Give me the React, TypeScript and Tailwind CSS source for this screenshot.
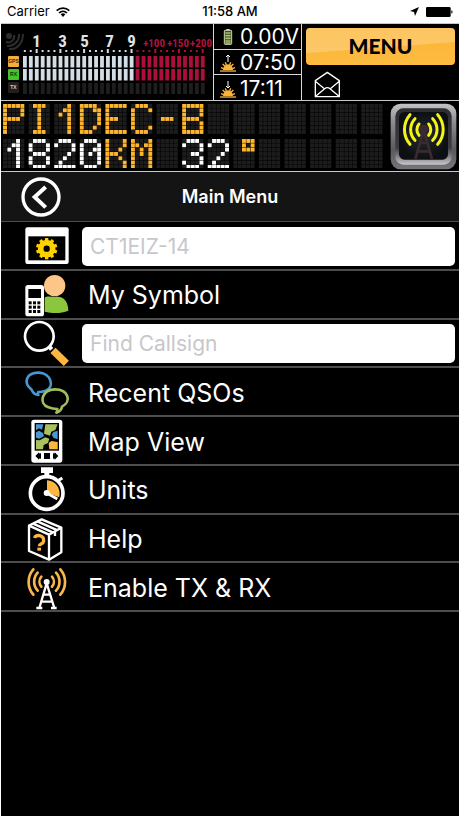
import type { ReactNode } from 'react';

const GLYPHS: Record<string, string[]> = {
  P: ['11111', '10001', '10001', '11110', '10000', '10000', '10000'],
  I: ['01110', '00100', '00100', '00100', '00100', '00100', '01110'],
  '1': ['00010', '00110', '01010', '00010', '00010', '00010', '00010'],
  D: ['11110', '10011', '10001', '10001', '10001', '10010', '11100'],
  E: ['11111', '10000', '10000', '11100', '10000', '10000', '11111'],
  C: ['01110', '10001', '10000', '10000', '10000', '10001', '01110'],
  '-': ['00000', '00000', '00000', '01110', '00000', '00000', '00000'],
  B: ['11111', '10001', '10001', '11110', '10001', '10001', '11111'],
  '8': ['01110', '10001', '10001', '01110', '10001', '10001', '01110'],
  '2': ['01110', '10001', '00001', '00010', '00100', '01000', '11111'],
  '0': ['01110', '10001', '10011', '10101', '10001', '10001', '01110'],
  K: ['10001', '10001', '10010', '11100', '10010', '10001', '10001'],
  M: ['10001', '11011', '10101', '10101', '10001', '10001', '10001'],
  '3': ['01110', '10001', '00001', '00110', '00001', '10001', '01110'],
  '°': ['00111', '00101', '00111', '00000', '00000', '00000', '00000'],
};

const CELLS = 15;
const AMBER = '#ffb52e';

function LedRow({ text, colors }: { text: string; colors: string[] }) {
  const dots: ReactNode[] = [];
  for (let c = 0; c < CELLS; c++) {
    const glyph = GLYPHS[text[c]];
    for (let y = 0; y < 7; y++) {
      for (let x = 0; x < 5; x++) {
        const on = glyph ? glyph[y][x] === '1' : false;
        dots.push(
          <rect
            key={`${c}-${y}-${x}`}
            x={c * 59 + x * 10}
            y={y * 10}
            width="9"
            height="9"
            fill={on ? colors[c] : '#1c1c1c'}
          />,
        );
      }
    }
  }
  return (
    <svg viewBox="0 0 876 69" className="block w-full" role="img" aria-label={text}>
      {dots}
    </svg>
  );
}

function SignalMeter() {
  const bars = Array.from({ length: 31 }, (_, i) => i);
  const majors = [2, 6, 10, 14, 18, 22, 26, 30];
  const digits: [string, number][] = [['1', 36], ['3', 62], ['5', 84], ['7', 109], ['9', 131]];
  const plus: [string, number][] = [['+100', 154], ['+150', 178], ['+200', 201]];
  return (
    <svg viewBox="0 0 212 76" className="block h-[76px] w-[212px] shrink-0" role="img" aria-label="Signal meter">
      <g fill="none" stroke="#2d2d2d" strokeWidth="2">
        <circle cx="8" cy="12" r="2" fill="#2d2d2d" />
        <path d="M5 18a6 6 0 0 0 8-7M6 22a11 11 0 0 0 12-12M8 25c8 1 14-6 14-15" />
      </g>
      <g textAnchor="middle" className="font-['Liberation_Sans_Narrow','Roboto_Condensed','DejaVu_Sans_Condensed','Roboto',sans-serif]">
        {digits.map(([t, x]) => (
          <text key={t} x={x - 0.5} y="23" fontSize="17" fontWeight="700" fill="#dfe4e8">{t}</text>
        ))}
        {plus.map(([t, x]) => (
          <text key={t} x={x - 1} y="23" fontSize="11" fontWeight="700" fill="#b3123d">{t}</text>
        ))}
      </g>
      {bars.map((i) => {
        const x = 22 + i * 5.93;
        const color = i < 19 ? '#d3dde6' : '#ab0f3a';
        const major = majors.includes(i);
        return (
          <g key={i} fill={color}>
            <rect x={x + 0.8} y={major ? 25 : 26} width="2" height={major ? 4 : 2} />
            <rect x={x} y="32" width="3.8" height="11.5" />
            <rect x={x} y="45" width="3.8" height="11.5" />
            <rect x={x} y="59" width="3.8" height="11" fill="#1e1e1e" />
          </g>
        );
      })}
      <g textAnchor="middle" fontSize="5" fontWeight="700" className="font-['Liberation_Sans',sans-serif]">
        <rect x="7" y="32" width="11" height="11" rx="1" fill="#f3ad3d" />
        <text x="12.500" y="39" fill="#3a2a08">GPS</text>
        <rect x="7" y="45" width="11" height="11" rx="1" fill="#43c32c" />
        <text x="12.500" y="52" fill="#0c3a08">RX</text>
        <rect x="7" y="58" width="11" height="11" rx="1" fill="#202020" />
        <text x="12.500" y="65" fill="#d0d0d0">TX</text>
      </g>
    </svg>
  );
}

function SunIcon({ rising }: { rising: boolean }) {
  return (
    <svg viewBox="0 0 48 54" className="h-[18px] w-4 shrink-0" aria-hidden="true">
      <g stroke="#fdb338" strokeWidth="4">
        <path d="M8 30l7 7M40 30l-7 7M3 41l8 3M45 41l-8 3M16 25l3 8M32 25l-3 8" />
      </g>
      <path d="M9 48a15 17 0 0 1 30 0z" fill="#fdb338" />
      <path d="M0 51h48" stroke="#fdb338" strokeWidth="4" />
      <path
        d={rising ? 'M24 24V3M18 9l6-6 6 6' : 'M24 3v21M18 18l6 6 6-6'}
        fill="none"
        stroke="#fff"
        strokeWidth="3"
      />
    </svg>
  );
}

function BatteryCell() {
  return (
    <svg viewBox="0 0 26 48" className="h-4 w-4 shrink-0" aria-hidden="true">
      <rect x="8" y="0" width="10" height="5" fill="#cfd8b0" />
      <rect x="2" y="4" width="22" height="42" rx="2" fill="#39472a" stroke="#cfd8b0" strokeWidth="3" />
      <path d="M5 12h16M5 20h16M5 28h16M5 36h16M5 42h16" stroke="#a6c46a" strokeWidth="5" />
    </svg>
  );
}

function Readout({ icon, children }: { icon: ReactNode; children: ReactNode }) {
  return (
    <div className="flex min-h-0 items-center gap-1 bg-black pl-1.5 pt-0.5 text-[21px] leading-[22px] text-white">
      {icon}
      <span>{children}</span>
    </div>
  );
}

function TransmitIcon() {
  return (
    <svg viewBox="0 0 201 201" className="block h-[67px] w-[67px]" aria-hidden="true">
      <defs>
        <linearGradient id="bezel" x1="0" y1="0" x2="0" y2="1">
          <stop offset="0" stopColor="#c4c4c6" />
          <stop offset=".3" stopColor="#8a8a8e" />
          <stop offset=".7" stopColor="#5a5a5e" />
          <stop offset="1" stopColor="#77777b" />
        </linearGradient>
        <linearGradient id="bezelInner" x1="0" y1="0" x2="0" y2="1">
          <stop offset="0" stopColor="#2e2e31" />
          <stop offset=".7" stopColor="#3c3c40" />
          <stop offset="1" stopColor="#c4c6ca" />
        </linearGradient>
        <radialGradient id="glass">
          <stop offset="0" stopColor="#252b30" />
          <stop offset="1" stopColor="#0c1013" />
        </radialGradient>
      </defs>
      <rect x="2" y="2" width="197" height="197" rx="30" fill="url(#bezel)" />
      <rect x="16" y="16" width="169" height="169" rx="24" fill="url(#bezelInner)" />
      <rect x="27" y="27" width="147" height="143" rx="16" fill="url(#glass)" />
      <g fill="none" stroke="#3b2b2e" strokeWidth="8">
        <path d="M101 80L76 168M101 80l25 88M90 120h22M82 145h38" />
        <circle cx="101" cy="78" r="9" fill="#3b2b2e" />
      </g>
      <g fill="none" stroke="#f4f516" strokeWidth="9" strokeLinecap="round">
        <path d="M87 63a26 26 0 0 0 0 34M75 47a47 47 0 0 0 0 65M60 35a68 68 0 0 0 0 89" />
        <path d="M116 63a26 26 0 0 1 0 34M128 47a47 47 0 0 1 0 65M143 35a68 68 0 0 1 0 89" />
      </g>
    </svg>
  );
}

function Icon({ top, children }: { top: number; children: ReactNode }) {
  return (
    <svg viewBox={`69 ${top} 144 144`} className="h-12 w-12 shrink-0" aria-hidden="true" fill="none">
      {children}
    </svg>
  );
}

const settingsIcon = (
  <Icon top={150}>
    <rect x="76" y="166" width="130" height="110" rx="6" fill="#fff" />
    <rect x="85" y="193" width="111" height="72" fill="#000" />
    <circle cx="140" cy="230" r="18" stroke="#fdd000" strokeWidth="17" />
    <g stroke="#fdd000" strokeWidth="10">
      {[0, 36, 72, 108, 144, 180, 216, 252, 288, 324].map((a) => (
        <path key={a} d="M140 206v-8" transform={`rotate(${a} 140 230)`} />
      ))}
    </g>
  </Icon>
);

const symbolIcon = (
  <Icon top={296}>
    <circle cx="164" cy="340" r="32" fill="#fdc587" />
    <path d="M134 376c8-6 16-2 30-2 26-6 41 14 41 41-22 9-48 8-71 3z" fill="#8cc63f" />
    <rect x="76" y="338" width="56" height="94" rx="8" fill="#fff" />
    <rect x="85" y="350" width="38" height="27" fill="#000" />
    <g fill="#000">
      {[387, 400, 413].map((y) => [86, 99, 112].map((x) => <rect key={`${x}-${y}`} x={x} y={y} width="9" height="9" />))}
    </g>
  </Icon>
);

const searchIcon = (
  <Icon top={4}>
    <circle cx="118" cy="53" r="43" stroke="#fff" strokeWidth="8" />
    <path d="M147 83l8 9" stroke="#fff" strokeWidth="13" />
    <path d="M159 95l40 39" stroke="#fdb740" strokeWidth="22" />
  </Icon>
);

const chatIcon = (
  <Icon top={151}>
    <path
      d="M94 212C68 192 79 162 116 162s49 44 21 54c-9 3-14 4-22 4-3 5-1 5 0 9-11 0-17-8-21-17z"
      stroke="#4598d3"
      strokeWidth="8"
      strokeLinejoin="round"
    />
    <path
      d="M186 264c30-16 19-52-21-52s-50 42-20 54c10 4 19 5 27 5 0 5 0 8-3 11 9-3 16-8 17-18z"
      fill="#000"
      stroke="#a2bd5b"
      strokeWidth="8"
      strokeLinejoin="round"
    />
  </Icon>
);

const mapIcon = (
  <Icon top={297}>
    <rect x="94" y="305" width="93" height="129" rx="8" fill="#fff" />
    <rect x="104" y="315" width="73" height="83" fill="#000" />
    <path d="M108 319h22l-4 16-9-4-9 6z" fill="#4a97d2" />
    <path d="M136 319h37l-7 17-12 5-4 12-18-6z" fill="#a7c25e" />
    <path d="M173 338v26l-12-4-6-10 5-8zM108 343l9-5 12 7 3 10-15 7-9-3z" fill="#4a97d2" />
    <path d="M108 394v-28l11 1 17-9 12 4-4 13-13 6-2 13z" fill="#a7c25e" />
    <path d="M146 375l8-6 19 3v22h-25z" fill="#fdb740" />
    <g fill="#000">
      <path d="M106 414l11-11v22zM175 414l-11-11v22z" />
      <rect x="115" y="406" width="8" height="16" />
      <rect x="132" y="405" width="18" height="18" />
      <rect x="159" y="406" width="8" height="16" />
    </g>
  </Icon>
);

const stopwatchIcon = (
  <Icon top={5}>
    <path d="M123 9h36v17h-11v10h-15V26h-10z" fill="#fff" />
    <path d="M176 48l11-7" stroke="#fff" strokeWidth="9" />
    <circle cx="140" cy="86" r="49" stroke="#fff" strokeWidth="11" />
    <path d="M141 48a39 39 0 0 1 36 51l-36-14z" fill="#fdb740" />
    <circle cx="140" cy="86" r="9" fill="#fff" />
    <path d="M140 86l32 18" stroke="#fff" strokeWidth="8" />
  </Icon>
);

const boxIcon = (
  <Icon top={152}>
    <g stroke="#fff" strokeWidth="7" strokeLinejoin="round">
      <path d="M87 184l38-19 59 25v74l-37 22-60-26z" />
      <path d="M87 184l60 27v74M147 211l37-21M99 178l61 27M112 171l61 27" />
      <path d="M165 203v12" />
    </g>
    <path d="M104 221c2-12 29-10 27 9-1 10-13 6-13 16" stroke="#fdb740" strokeWidth="10" />
    <rect x="112" y="250" width="11" height="9" fill="#fdb740" />
  </Icon>
);

const towerIcon = (
  <Icon top={298}>
    <g stroke="#f8b64c" strokeWidth="8" strokeLinecap="round">
      <path d="M124 336a23 23 0 0 0 0 30M113 324a40 40 0 0 0 0 54M100 314a58 58 0 0 0 0 76" />
      <path d="M156 336a23 23 0 0 1 0 30M168 324a40 40 0 0 1 0 54M181 314a58 58 0 0 1 0 76" />
    </g>
    <circle cx="140" cy="352" r="9" fill="#fff" />
    <path d="M140 356l-22 74M140 356l23 74M131 390h18M123 411h34M109 430h18M153 430h17" stroke="#fff" strokeWidth="7" />
  </Icon>
);

function MenuRow({ icon, label }: { icon: ReactNode; label: string }) {
  return (
    <button
      type="button"
      className="flex w-full items-center gap-[17px] border-b-2 border-[#4d4d4f] pl-[22px] pt-0.5 text-left text-[25px] text-white"
    >
      {icon}
      <span className="pt-0.5">{label}</span>
    </button>
  );
}

function FieldRow({ icon, label }: { icon: ReactNode; label: string }) {
  return (
    <label className="flex w-full items-center gap-[11px] border-b-2 border-[#4d4d4f] pl-[22px] pr-1 pt-0.5">
      {icon}
      <input
        type="text"
        placeholder={label}
        aria-label={label}
        className="h-[39px] min-w-0 flex-1 rounded-[5px] bg-white px-2 text-[21px] text-black outline-none placeholder:text-[#c7c7cc]"
      />
    </label>
  );
}

export default function App() {
  return (
    <div className="flex min-h-screen flex-col bg-white px-px pb-0.5 font-['Inter','Liberation_Sans',sans-serif]">
      <div className="grid h-[23px] grid-cols-3 items-center px-1.5 text-[13px] text-black">
        <div className="flex items-center gap-1.5">
          <span>Carrier</span>
          <svg viewBox="0 0 42 30" className="h-[10px] w-[14px]" fill="none" stroke="#000" strokeWidth="5" aria-hidden="true">
            <path d="M2 11c11-10 27-10 38 0M9 18c7-7 17-7 24 0" />
            <path d="M14 22c4-4 10-4 14 0l-7 8z" fill="#000" stroke="none" />
          </svg>
        </div>
        <span className="text-center font-medium">11:58 AM</span>
        <div className="flex items-center justify-end gap-[7px]">
          <svg viewBox="0 0 27 27" className="h-[9px] w-[9px]" aria-hidden="true">
            <path d="M27 0L15 27l-3-12L0 12z" />
          </svg>
          <svg viewBox="0 0 81 30" className="h-[10px] w-[27px]" aria-hidden="true">
            <rect width="74" height="30" rx="4" />
            <path d="M76 10c5 1 5 9 0 10z" />
          </svg>
        </div>
      </div>

      <div className="flex flex-1 flex-col bg-black">
        <header className="flex h-[78px] border-y border-[#c8c8c8]">
          <SignalMeter />
          <div className="grid w-[89px] shrink-0 grid-rows-3 gap-px border-x border-[#d8d8d8] bg-[#d8d8d8]">
            <Readout icon={<BatteryCell />}>0.00V</Readout>
            <Readout icon={<SunIcon rising />}>07:50</Readout>
            <Readout icon={<SunIcon rising={false} />}>17:11</Readout>
          </div>
          <div className="flex flex-1 flex-col gap-[6px] px-1 pt-1">
            <button
              type="button"
              className="relative h-[37px] w-full overflow-hidden rounded-[4px] bg-linear-to-b from-[#fcb534] to-[#fdbb42] pb-0.5 font-['Lato','Open_Sans',sans-serif] text-[21px] font-black text-black"
            >
              <svg viewBox="0 0 148 37" preserveAspectRatio="none" className="absolute inset-0 h-full w-full" aria-hidden="true">
                <path d="M0 0h148v14Q74 20 0 25z" fill="#fff" fillOpacity=".22" />
              </svg>
              <span className="relative">MENU</span>
            </button>
            <button type="button" aria-label="Messages" className="ml-2 w-[27px]">
              <svg viewBox="0 0 81 81" className="block h-[27px] w-[27px]" fill="none" stroke="#fff" strokeWidth="4" strokeLinejoin="round" aria-hidden="true">
                <path d="M4 29L40 4l36 25v48H4zM4 31l28 23M76 31L48 54M5 76l27-23q8-6 16 0l27 23" />
              </svg>
            </button>
          </div>
        </header>

        <section className="flex h-[71px] items-center gap-[7px] border-b border-[#c8c8c8] px-[2px]">
          <div className="flex min-w-0 flex-1 flex-col gap-[5px]">
            <LedRow text="PI1DEC-B" colors={Array(CELLS).fill(AMBER)} />
            <LedRow
              text="1820KM 32°"
              colors={['#fff', '#fff', '#fff', '#fff', AMBER, AMBER, AMBER, '#fff', '#fff', AMBER]}
            />
          </div>
          <button type="button" aria-label="Transmit">
            <TransmitIcon />
          </button>
        </section>

        <div className="grid h-[50px] grid-cols-[1fr_auto_1fr] items-center border-b border-[#4d4d4f] bg-[#141414] pl-5">
          <button type="button" aria-label="Back" className="h-10 w-10">
            <svg viewBox="0 0 120 120" className="h-10 w-10" fill="none" stroke="#fff" aria-hidden="true">
              <circle cx="60" cy="60" r="54" strokeWidth="10" />
              <path d="M74 30L41 60l33 31" strokeWidth="12" />
            </svg>
          </button>
          <h1 className="pr-5 text-[18px] font-semibold text-white">Main Menu</h1>
        </div>

        <nav className="grid h-[390px] auto-rows-fr">
          <FieldRow icon={settingsIcon} label="CT1EIZ-14" />
          <MenuRow icon={symbolIcon} label="My Symbol" />
          <FieldRow icon={searchIcon} label="Find Callsign" />
          <MenuRow icon={chatIcon} label="Recent QSOs" />
          <MenuRow icon={mapIcon} label="Map View" />
          <MenuRow icon={stopwatchIcon} label="Units" />
          <MenuRow icon={boxIcon} label="Help" />
          <MenuRow icon={towerIcon} label="Enable TX & RX" />
        </nav>
      </div>
    </div>
  );
}
